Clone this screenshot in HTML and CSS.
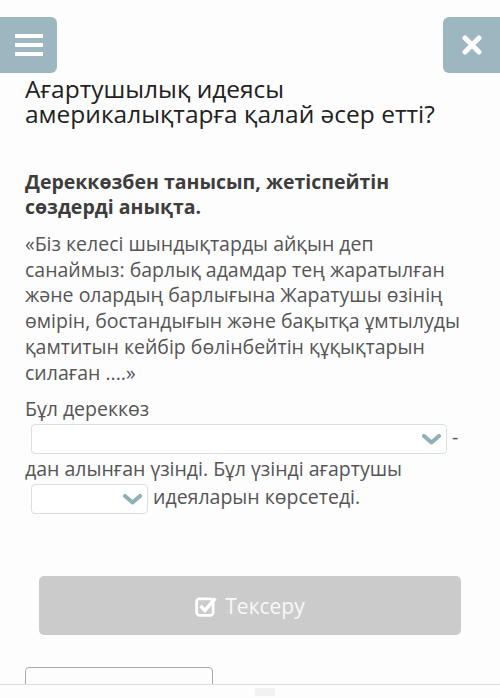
FILE: index.html
```html
<!DOCTYPE html>
<html lang="kk">

<head>
  <meta charset="UTF-8">
  <meta name="viewport" content="width=device-width, initial-scale=1.0">
  <title>Тапсырма</title>
  <link rel="stylesheet" href="styles.css">
</head>

<body>
  <header class="topbar">
    <button class="tool-btn menu-btn" aria-label="Мәзір">
      <svg width="28" height="22" viewBox="0 0 28 22">
        <rect x="0" y="0" width="28" height="4" fill="#fff" />
        <rect x="0" y="9" width="28" height="4" fill="#fff" />
        <rect x="0" y="18" width="28" height="4" fill="#fff" />
      </svg>
    </button>
    <button class="tool-btn close-btn" aria-label="Жабу">
      <svg width="20" height="20" viewBox="0 0 20 20">
        <path d="M3 3 L17 17 M17 3 L3 17" stroke="#fff" stroke-width="5" stroke-linecap="round" />
      </svg>
    </button>
  </header>

  <main class="content">
    <h1 class="title">Ағартушылық идеясы америкалықтарға қалай әсер етті?</h1>

    <h2 class="task">Дереккөзбен танысып, жетіспейтін сөздерді анықта.</h2>

    <p class="quote">«Біз келесі шындықтарды айқын деп санаймыз: барлық адамдар тең жаратылған және олардың барлығына Жаратушы өзінің өмірін, бостандығын және бақытқа ұмтылуды қамтитын кейбір бөлінбейтін құқықтарын силаған ....»</p>

    <p class="fill">Бұл дереккөз <span class="select wide"><svg class="chev" width="19" height="11" viewBox="0 0 19 11"><path d="M2 2 L9.5 8.5 L17 2" fill="none" stroke="#8fb1b3" stroke-width="4" stroke-linecap="round" stroke-linejoin="round" /></svg></span> -<wbr>дан алынған үзінді. Бұл үзінді ағартушы <span class="select narrow"><svg class="chev" width="19" height="11" viewBox="0 0 19 11"><path d="M2 2 L9.5 8.5 L17 2" fill="none" stroke="#8fb1b3" stroke-width="4" stroke-linecap="round" stroke-linejoin="round" /></svg></span> идеяларын көрсетеді.</p>

    <div class="check-wrap">
      <button class="check-btn">
        <svg width="22" height="22" viewBox="0 0 20 20">
          <rect x="1.5" y="3.5" width="15" height="15" rx="2.5" fill="none" stroke="#fff" stroke-width="2.5" />
          <path d="M5 10 L9 14 L18.5 3" fill="none" stroke="#fff" stroke-width="3.2" />
        </svg>
        Тексеру
      </button>
    </div>

    <div class="next-box"></div>
  </main>

  <footer class="bottom">
    <span class="dot"></span>
  </footer>
</body>

</html>
```

FILE: styles.css
```css
* {
  padding: 0;
  margin: 0;
  box-sizing: border-box;
}

body {
  font-family: "Open Sans", "DejaVu Sans", sans-serif;
  background-color: #fdfdfd;
  color: #333;
  height: 698px;
  overflow: hidden;
  position: relative;
}

.topbar {
  display: flex;
  justify-content: space-between;
  padding-top: 17px;
}

.tool-btn {
  width: 57px;
  height: 56px;
  border: none;
  background: #9db7c1;
  display: flex;
  align-items: center;
  justify-content: center;
}

.menu-btn {
  border-radius: 0 6px 6px 0;
}

.close-btn {
  border-radius: 6px 0 0 6px;
}

.content {
  padding: 0 25px;
}

.title,
.task,
.quote,
.fill {
  margin-right: 13px;
}

.title {
  font-weight: 400;
  font-size: 24.5px;
  line-height: 25px;
  color: #222;
  margin-top: 3px;
}

.task {
  font-size: 19.5px;
  font-weight: 700;
  line-height: 25px;
  color: #3d3d3d;
  margin-top: 43px;
}

.quote {
  font-size: 19.5px;
  line-height: 25.7px;
  color: #555;
  margin-top: 12px;
}

.fill {
  font-size: 19.5px;
  line-height: 28px;
  color: #555;
  margin-top: 10px;
}

.select {
  display: inline-flex;
  align-items: center;
  justify-content: flex-end;
  height: 30px;
  margin: 1px 0 1px 6px;
  padding-right: 5px;
  border: 1px solid #d8e0e2;
  border-radius: 4px;
  background: #fff;
  vertical-align: middle;
}

.wide {
  width: 416px;
}

.narrow {
  width: 117px;
}

.check-wrap {
  padding: 0 14px;
  margin-top: 61px;
}

.check-btn {
  width: 100%;
  height: 59px;
  border: none;
  border-radius: 5px;
  background: #cbcbcb;
  color: #f8f8f8;
  font-family: "Open Sans", sans-serif;
  font-size: 21px;
  display: flex;
  align-items: center;
  justify-content: center;
  gap: 8px;
}

.next-box {
  width: 188px;
  height: 40px;
  margin-top: 32px;
  border: 1px solid #aaa;
  border-radius: 4px;
}

.bottom {
  position: absolute;
  left: 0;
  right: 0;
  bottom: 0;
  height: 14px;
  background: #fdfdfd;
  border-top: 1px solid #dedede;
  display: flex;
  justify-content: center;
}

.dot {
  width: 20px;
  height: 8px;
  margin: 3px 0 0 30px;
  background: #f2f2f2;
}
```
